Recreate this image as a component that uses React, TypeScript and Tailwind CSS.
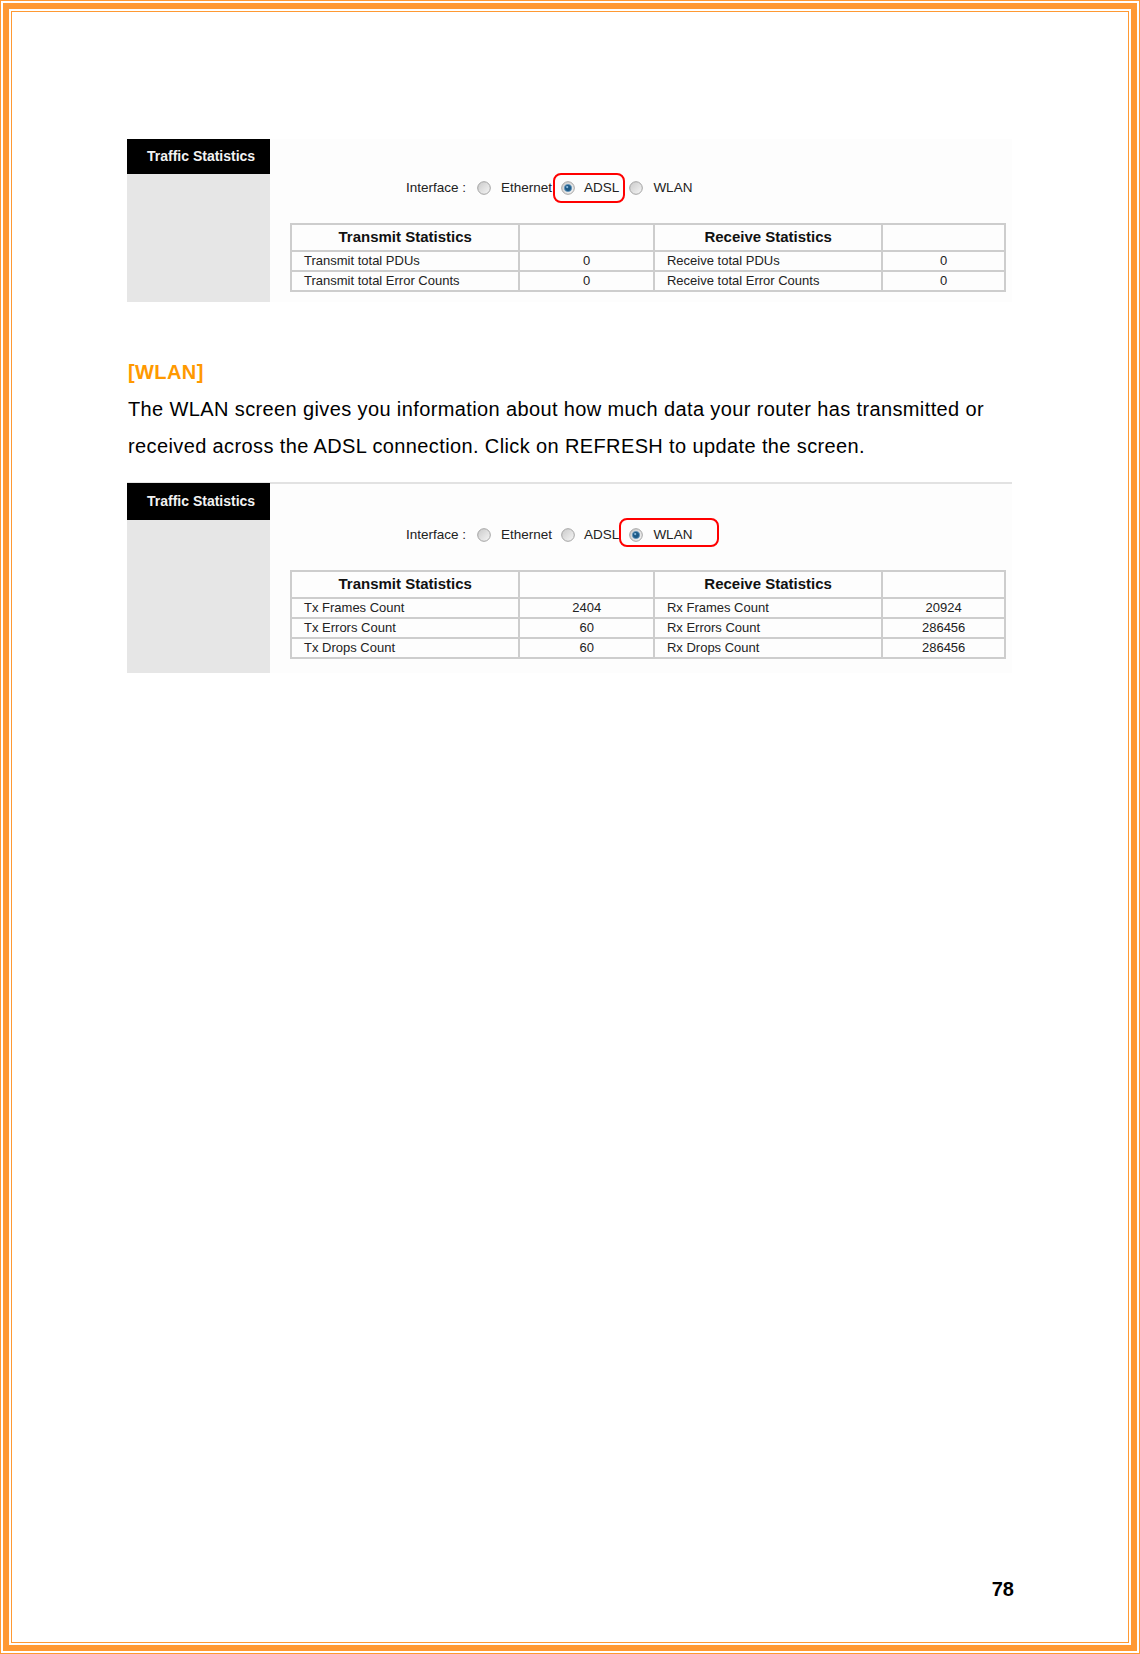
type Row = { tx: string; txv: string; rx: string; rxv: string };

const adslRows: Row[] = [
  { tx: "Transmit total PDUs", txv: "0", rx: "Receive total PDUs", rxv: "0" },
  { tx: "Transmit total Error Counts", txv: "0", rx: "Receive total Error Counts", rxv: "0" },
];

const wlanRows: Row[] = [
  { tx: "Tx Frames Count", txv: "2404", rx: "Rx Frames Count", rxv: "20924" },
  { tx: "Tx Errors Count", txv: "60", rx: "Rx Errors Count", rxv: "286456" },
  { tx: "Tx Drops Count", txv: "60", rx: "Rx Drops Count", rxv: "286456" },
];

function Radio({ checked }: { checked?: boolean }) {
  return (
    <svg width="14" height="14" viewBox="0 0 14 14" className="shrink-0">
      <defs>
        <linearGradient id="radioFace" x1="0" y1="0" x2="1" y2="1">
          <stop offset="0" stopColor="#c9c9c9" />
          <stop offset="1" stopColor="#f7f7f7" />
        </linearGradient>
      </defs>
      <circle cx="7" cy="7" r="6.3" fill="url(#radioFace)" stroke="#a3a3a3" strokeWidth="1" />
      {checked && (
        <>
          <circle cx="7" cy="7" r="3.6" fill="#1d5a86" stroke="#5d93bd" strokeWidth="0.8" />
          <circle cx="6.2" cy="6.1" r="1.1" fill="#8fbde0" />
        </>
      )}
    </svg>
  );
}

function StatsTable({ rows }: { rows: Row[] }) {
  const cell = "border-2 border-[#cdcdcd] h-[20px] py-0 leading-[16px]";
  return (
    <table className="w-[716px] border-collapse text-[13px] text-[#222]">
      <colgroup>
        <col className="w-[229px]" />
        <col className="w-[135px]" />
        <col className="w-[229px]" />
        <col className="w-[123px]" />
      </colgroup>
      <thead>
        <tr>
          <th className="h-[27px] border-2 border-[#cdcdcd] text-[15px] font-bold text-[#111]">
            Transmit Statistics
          </th>
          <th className="border-2 border-[#cdcdcd]"></th>
          <th className="border-2 border-[#cdcdcd] text-[15px] font-bold text-[#111]">
            Receive Statistics
          </th>
          <th className="border-2 border-[#cdcdcd]"></th>
        </tr>
      </thead>
      <tbody>
        {rows.map((r) => (
          <tr key={r.tx}>
            <td className={`${cell} pl-3`}>{r.tx}</td>
            <td className={`${cell} text-center`}>{r.txv}</td>
            <td className={`${cell} pl-3`}>{r.rx}</td>
            <td className={`${cell} text-center`}>{r.rxv}</td>
          </tr>
        ))}
      </tbody>
    </table>
  );
}

function InterfaceRow({ selected }: { selected: "ADSL" | "WLAN" }) {
  return (
    <div className="flex h-[20px] items-center pl-[116px] text-[13.5px] text-[#222]">
      <span>Interface :</span>
      <span className="ml-[11px]">
        <Radio />
      </span>
      <span className="ml-[10px]">Ethernet</span>
      <span className="ml-[9px]">
        <Radio checked={selected === "ADSL"} />
      </span>
      <span className="ml-[9px]">ADSL</span>
      <span className="ml-[10px]">
        <Radio checked={selected === "WLAN"} />
      </span>
      <span className="ml-[10px]">WLAN</span>
    </div>
  );
}

function Screenshot({ selected, rows }: { selected: "ADSL" | "WLAN"; rows: Row[] }) {
  const wlan = selected === "WLAN";
  return (
    <div className={`relative flex w-[885px] ${wlan ? "h-[191px]" : "h-[163px]"}`}>
      <div className="flex w-[143px] flex-col bg-[#e6e6e6]">
        <div
          className={`flex items-center bg-black pl-[20px] text-[14px] font-bold text-[#f2f2f2] ${
            wlan ? "mt-[1px] h-[37px]" : "h-[35px]"
          }`}
        >
          Traffic Statistics
        </div>
      </div>
      <div
        className={`flex-1 bg-[#fdfdfd] pl-[20px] ${
          wlan ? "border-t-2 border-[#e2e2e2] pt-[41px]" : "pt-[39px]"
        }`}
      >
        <InterfaceRow selected={selected} />
        <div className="mt-[25px]">
          <StatsTable rows={rows} />
        </div>
      </div>
      {wlan ? (
        <div className="absolute left-[492px] top-[36px] h-[29px] w-[100px] rounded-[8px] border-2 border-[#ff0000]" />
      ) : (
        <div className="absolute left-[426px] top-[34px] h-[30px] w-[72px] rounded-[8px] border-2 border-[#ff0000]" />
      )}
    </div>
  );
}

export default function App() {
  return (
    <div className="h-[1654px] w-[1140px] bg-white font-['Liberation_Sans',Arial,sans-serif]">
      <div className="h-full w-full border border-[#ff9933] p-[2px]">
        <div className="h-full w-full border-[6px] border-[#ff9933] p-[2px]">
          <div className="flex h-full w-full flex-col border border-[#ff9933] pl-[115px] pr-[114px] pt-[127px] pb-[41px]">
            <Screenshot selected="ADSL" rows={adslRows} />

            <h3 className="ml-[1px] mt-[58px] text-[20px] font-bold leading-[24px] tracking-[0.4px] text-[#ff9900]">
              [WLAN]
            </h3>
            <p className="ml-[1px] mt-[7px] text-[20px] leading-[37px] tracking-[0.38px] text-black">
              The WLAN screen gives you information about how much data your router has transmitted or
              <br />
              received across the ADSL connection. Click on REFRESH to update the screen.
            </p>

            <div className="mt-[17px]">
              <Screenshot selected="WLAN" rows={wlanRows} />
            </div>

            <div className="mt-auto text-right text-[20px] font-bold leading-[24px] text-black">78</div>
          </div>
        </div>
      </div>
    </div>
  );
}
